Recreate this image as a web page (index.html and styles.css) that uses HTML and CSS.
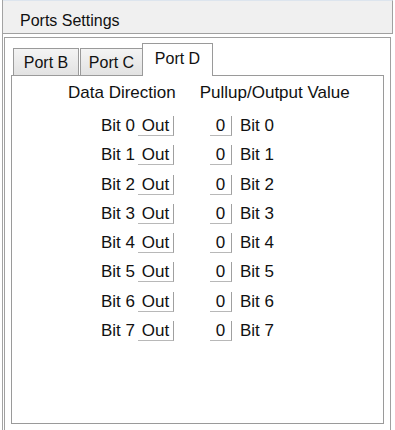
FILE: index.html
```html
<!DOCTYPE html>
<html>
<head>
<meta charset="utf-8">
<link rel="stylesheet" href="styles.css">
</head>
<body>
<div class="root">
  <div class="header">Ports Settings</div>
  <div class="frame">
    <div class="tabs">
      <div class="tab tab-b">Port B</div>
      <div class="tab tab-c">Port C</div>
      <div class="tab tab-d active">Port D</div>
    </div>
    <div class="panel">
      <div class="heads">
        <span class="head-dir">Data Direction</span>
        <span class="head-val">Pullup/Output Value</span>
      </div>
      <div class="rows">
        <div class="row"><span class="lbl-l">Bit 0</span><span class="btn out">Out</span><span class="btn zero">0</span><span class="lbl-r">Bit 0</span></div>
        <div class="row"><span class="lbl-l">Bit 1</span><span class="btn out">Out</span><span class="btn zero">0</span><span class="lbl-r">Bit 1</span></div>
        <div class="row"><span class="lbl-l">Bit 2</span><span class="btn out">Out</span><span class="btn zero">0</span><span class="lbl-r">Bit 2</span></div>
        <div class="row"><span class="lbl-l">Bit 3</span><span class="btn out">Out</span><span class="btn zero">0</span><span class="lbl-r">Bit 3</span></div>
        <div class="row"><span class="lbl-l">Bit 4</span><span class="btn out">Out</span><span class="btn zero">0</span><span class="lbl-r">Bit 4</span></div>
        <div class="row"><span class="lbl-l">Bit 5</span><span class="btn out">Out</span><span class="btn zero">0</span><span class="lbl-r">Bit 5</span></div>
        <div class="row"><span class="lbl-l">Bit 6</span><span class="btn out">Out</span><span class="btn zero">0</span><span class="lbl-r">Bit 6</span></div>
        <div class="row"><span class="lbl-l">Bit 7</span><span class="btn out">Out</span><span class="btn zero">0</span><span class="lbl-r">Bit 7</span></div>
      </div>
    </div>
  </div>
</div>
</body>
</html>
```

FILE: styles.css
```css
html, body {
  margin: 0;
  padding: 0;
  background: #ffffff;
}

body {
  font-family: "Liberation Sans", Arial, sans-serif;
  color: #111111;
  width: 395px;
  height: 430px;
  overflow: hidden;
}

.root {
  margin-left: 2px;
  border-left: 1px solid #a3a3a3;
  width: 390px;
  height: 430px;
  overflow: hidden;
}

.header {
  box-sizing: content-box;
  height: 22px;
  padding-top: 10px;
  padding-left: 17px;
  background: #f0f0f0;
  border-top: 1px solid #dde5ee;
  border-bottom: 1px solid #a0a0a0;
  border-right: 1px solid #a0a0a0;
  font-size: 16px;
  line-height: 19px;
}

.frame {
  margin-top: 3px;
  margin-left: 1px;
  width: 387px;
  height: 420px;
  box-sizing: border-box;
  border: 1px solid #a0a0a0;
  padding: 5px 6px 0 6px;
}

.tabs {
  display: flex;
  align-items: flex-end;
  height: 32px;
  font-size: 16px;
  line-height: 19px;
}

.tab {
  box-sizing: border-box;
  border: 1px solid #9a9a9a;
  border-bottom: none;
  text-align: center;
  background: linear-gradient(#f4f4f4, #e2e2e2);
}

.tab-b {
  margin-left: 2px;
  width: 66px;
  height: 27px;
  padding-top: 4px;
}

.tab-c {
  margin-left: 1px;
  width: 63px;
  height: 27px;
  padding-top: 4px;
}

.tab-d {
  margin-left: -1px;
  width: 71px;
  height: 33px;
  margin-bottom: -1px;
  padding-top: 5px;
  background: #ffffff;
  position: relative;
  z-index: 2;
}

.panel {
  box-sizing: border-box;
  height: 349px;
  border: 1px solid #9a9a9a;
  padding-top: 7px;
  font-size: 17px;
  line-height: 19px;
}

.heads {
  display: flex;
}

.head-dir {
  margin-left: 56px;
}

.head-val {
  margin-left: 24px;
}

.rows {
  margin-top: 14px;
}

.row {
  display: flex;
  align-items: flex-start;
  height: 29.3px;
}

.lbl-l {
  width: 123px;
  text-align: right;
}

.btn {
  box-sizing: border-box;
  height: 20px;
  text-align: center;
  border-right: 1px solid #a0a0a0;
  border-bottom: 1px solid #b8b8b8;
  background: #ffffff;
}

.btn.out {
  margin-left: 3px;
  width: 36px;
}

.btn.zero {
  margin-left: 36px;
  width: 22px;
}

.lbl-r {
  margin-left: 8px;
}
```
